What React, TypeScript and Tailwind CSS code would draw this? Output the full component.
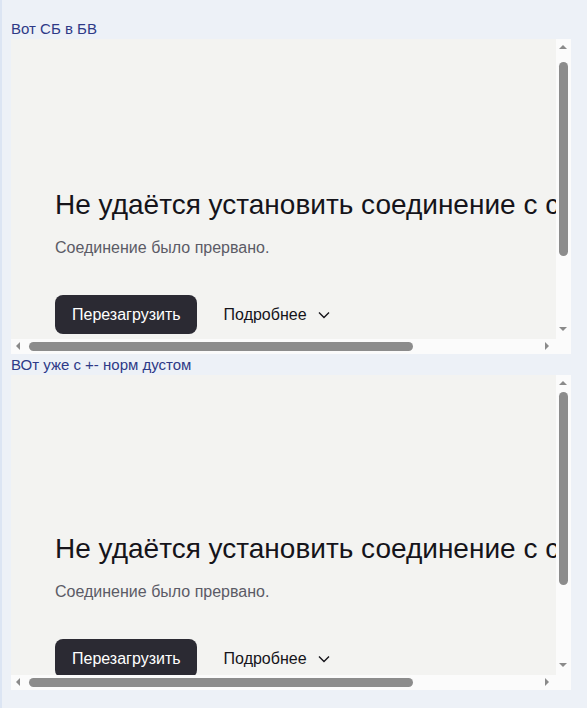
import React from "react";

type FrameProps = {
  top: number;
  thumbTop: number;
  thumbHeight: number;
};

// fake iframe with the browser "connection failed" page and classic scrollbars
function ErrorFrame({ top, thumbTop, thumbHeight }: FrameProps) {
  return (
    <div className="grid w-[560px] h-[315px] grid-cols-[545px_15px] grid-rows-[300px_15px] bg-[#fbfbfb]">
      <div className="overflow-hidden bg-[#f3f3f1]">
        <div className="flex flex-col pl-[44px] whitespace-nowrap" style={{ paddingTop: top }}>
          <h1 className="text-[28px] leading-[32px] text-[#15141a]">
            Не удаётся установить соединение с сайтом
          </h1>
          <p className="mt-[17px] text-[16px] leading-[20px] text-[#5b5b66]">
            Соединение было прервано.
          </p>
          <div className="mt-[37px] flex items-center">
            <button className="h-[39px] rounded-[8px] bg-[#2b2a33] pl-[17px] pr-[16px] text-[16px] text-white">
              Перезагрузить
            </button>
            <button className="ml-[27px] flex items-center gap-[11px] text-[16px] text-[#15141a]">
              Подробнее
              <svg width="12" height="8" viewBox="0 0 12 8" fill="none">
                <path d="M1 1.5l5 5 5-5" stroke="#15141a" strokeWidth="1.4" />
              </svg>
            </button>
          </div>
        </div>
      </div>

      {/* vertical scrollbar */}
      <div className="relative">
        <div className="absolute left-[3px] top-[6px] h-0 w-0 border-x-[4px] border-b-[4px] border-x-transparent border-b-[#8a8a8a]" />
        <div
          className="absolute left-[3px] w-[9px] rounded-full bg-[#8c8c8c]"
          style={{ top: thumbTop, height: thumbHeight }}
        />
        <div className="absolute left-[3px] top-[288px] h-0 w-0 border-x-[4px] border-t-[4px] border-x-transparent border-t-[#8a8a8a]" />
      </div>

      {/* horizontal scrollbar */}
      <div className="relative">
        <div className="absolute left-[5px] top-[3px] h-0 w-0 border-y-[4px] border-r-[4px] border-y-transparent border-r-[#8a8a8a]" />
        <div className="absolute left-[18px] top-[3px] h-[9px] w-[384px] rounded-full bg-[#8c8c8c]" />
        <div className="absolute left-[534px] top-[3px] h-0 w-0 border-y-[4px] border-l-[4px] border-y-transparent border-l-[#8a8a8a]" />
      </div>
      <div />
    </div>
  );
}

export default function App() {
  return (
    <div className="min-h-screen border-l-2 border-[#dce5f3] bg-[#edf1f7] pl-[9px] pt-[18px] font-['Liberation_Sans',Arial,sans-serif]">
      <div className="text-[15px] leading-[21px] text-[#2e3a87]">Вот СБ в БВ</div>
      <ErrorFrame top={150} thumbTop={23} thumbHeight={194} />
      <div className="text-[15px] leading-[21px] text-[#2e3a87]">ВОт уже с +- норм дустом</div>
      <ErrorFrame top={158} thumbTop={17} thumbHeight={193} />
    </div>
  );
}
